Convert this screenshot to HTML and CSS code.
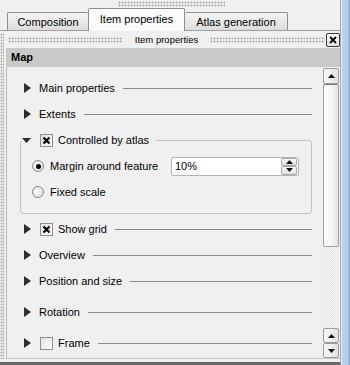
FILE: index.html
```html
<!DOCTYPE html>
<html lang="en">
<head>
<meta charset="UTF-8">
<title>Item properties</title>
<link rel="stylesheet" href="styles.css">
</head>
<body>

<div class="window">
  <div class="main">
    <div class="topbar"><div class="grip top-grip"></div></div>

    <div class="tabs">
      <div class="tab tab-comp">Composition</div>
      <div class="tab tab-item active">Item properties</div>
      <div class="tab tab-atlas">Atlas generation</div>
    </div>

    <div class="dock">
      <div class="dock-grip"></div>
      <div class="dock-body">
        <div class="titlebar">
          <div class="grip"></div>
          <span class="title">Item properties</span>
          <div class="grip"></div>
          <div class="close-btn">
            <svg width="8" height="8" viewBox="0 0 8 8"><path d="M1 1L7 7M7 1L1 7" stroke="#000" stroke-width="1.8"/></svg>
          </div>
        </div>

        <div class="map-header">Map</div>

        <div class="scroll-area">
          <div class="content">
            <div class="row">
              <svg class="tri-right" width="7" height="10" viewBox="0 0 7 10"><path d="M0 0L7 5L0 10z"/></svg>
              <span>Main properties</span>
              <div class="rule"></div>
            </div>
            <div class="row">
              <svg class="tri-right" width="7" height="10" viewBox="0 0 7 10"><path d="M0 0L7 5L0 10z"/></svg>
              <span>Extents</span>
              <div class="rule"></div>
            </div>

            <!-- Controlled by atlas -->
            <div class="group">
              <div class="group-head">
                <svg class="tri-down" width="9" height="5" viewBox="0 0 9 5"><path d="M0 0H9L4.5 5z"/></svg>
                <div class="check">
                  <svg width="9" height="9" viewBox="0 0 9 9"><path d="M1.5 1.5L7.5 7.5M7.5 1.5L1.5 7.5" stroke="#000" stroke-width="2.2"/></svg>
                </div>
                <span>Controlled by atlas</span>
              </div>
              <div class="opt opt-first">
                <div class="radio on"></div>
                <span>Margin around feature</span>
                <div class="spin">
                  <span class="spin-val">10%</span>
                  <div class="spin-btns">
                    <div class="spin-btn"><svg width="7" height="4" viewBox="0 0 7 4"><path d="M0 4L3.5 0L7 4z"/></svg></div>
                    <div class="spin-btn"><svg width="7" height="4" viewBox="0 0 7 4"><path d="M0 0H7L3.5 4z"/></svg></div>
                  </div>
                </div>
              </div>
              <div class="opt">
                <div class="radio"></div>
                <span>Fixed scale</span>
              </div>
            </div>

            <div class="row row-grid">
              <svg class="tri-right" width="7" height="10" viewBox="0 0 7 10"><path d="M0 0L7 5L0 10z"/></svg>
              <div class="check">
                <svg width="9" height="9" viewBox="0 0 9 9"><path d="M1.5 1.5L7.5 7.5M7.5 1.5L1.5 7.5" stroke="#000" stroke-width="2.2"/></svg>
              </div>
              <span>Show grid</span>
              <div class="rule"></div>
            </div>
            <div class="row">
              <svg class="tri-right" width="7" height="10" viewBox="0 0 7 10"><path d="M0 0L7 5L0 10z"/></svg>
              <span>Overview</span>
              <div class="rule"></div>
            </div>
            <div class="row">
              <svg class="tri-right" width="7" height="10" viewBox="0 0 7 10"><path d="M0 0L7 5L0 10z"/></svg>
              <span>Position and size</span>
              <div class="rule"></div>
            </div>
            <div class="row row-spaced">
              <svg class="tri-right" width="7" height="10" viewBox="0 0 7 10"><path d="M0 0L7 5L0 10z"/></svg>
              <span>Rotation</span>
              <div class="rule"></div>
            </div>
            <div class="row row-spaced">
              <svg class="tri-right" width="7" height="10" viewBox="0 0 7 10"><path d="M0 0L7 5L0 10z"/></svg>
              <div class="check"></div>
              <span>Frame</span>
              <div class="rule"></div>
            </div>
          </div>

          <div class="scrollbar">
            <div class="sb-btn sb-top"><svg width="7" height="4" viewBox="0 0 7 4"><path d="M0 4L3.5 0L7 4z"/></svg></div>
            <div class="sb-thumb"></div>
            <div class="sb-track"></div>
            <div class="sb-btn"><svg width="7" height="4" viewBox="0 0 7 4"><path d="M0 4L3.5 0L7 4z"/></svg></div>
            <div class="sb-btn"><svg width="7" height="4" viewBox="0 0 7 4"><path d="M0 0H7L3.5 4z"/></svg></div>
          </div>
        </div>
      </div>
    </div>
  </div>
  <div class="win-edge"></div>
</div>

</body>
</html>
```

FILE: styles.css
```css
body { margin: 0; width: 350px; height: 365px; overflow: hidden; background: #f0f0f0; font-family: "Liberation Sans", Arial, sans-serif; font-size: 11px; color: #000; }
svg path { fill: #111; }
.window { display: flex; height: 365px; }
.main { width: 341px; box-sizing: border-box; border-right: 1px solid #a3a8ae; border-bottom: 3px solid #6a6a6a; padding-bottom: 3px; display: flex; flex-direction: column; }
.win-edge { width: 9px; background: linear-gradient(90deg, #e4edf6 0 1px, #bcd4ec 1px, #aac6e3 8px, #86a3c2 8px); }

/* dotted grips */
.grip { background-image: radial-gradient(circle at 1.5px 1.5px, #a9a9a9 0 0.9px, transparent 1.1px); background-size: 3px 3px; }
.topbar { height: 8px; display: flex; justify-content: center; align-items: flex-start; }
.top-grip { width: 107px; height: 6px; margin-left: 3px; margin-top: 1px; }

/* tabs */
.tabs { height: 23px; box-sizing: border-box; border-bottom: 1px solid #a0a0a0; padding-left: 7px; display: flex; align-items: flex-end; }
.tab { height: 18px; box-sizing: border-box; border: 1px solid #8e8e8e; border-bottom: none; border-radius: 2px 2px 0 0; background: linear-gradient(#f6f6f6, #dcdcdc); display: flex; align-items: center; justify-content: center; }
.tab-comp { width: 81px; border-right: none; }
.tab-item { width: 97px; }
.tab-atlas { width: 103px; border-left: none; }
.tab.active { height: 23px; margin-bottom: -1px; background: #fbfbfb; padding-bottom: 2px; }

/* dock */
.dock { flex: 1; display: flex; }
.dock-grip { width: 4px; margin: 2px 2px 0 0; background-image: radial-gradient(circle at 1.5px 1.5px, #b0b0b0 0 0.9px, transparent 1.1px); background-size: 2px 3px; }
.dock-body { flex: 1; display: flex; flex-direction: column; }
.titlebar { height: 17px; display: flex; align-items: center; padding-left: 2px; }
.titlebar .grip { flex: 1; height: 6px; }
.title { font-size: 9.5px; margin: 0 12px; }
.close-btn { width: 14px; height: 14px; box-sizing: border-box; border: 1px solid #3a3a3a; border-radius: 2px; margin-left: 1px; background: linear-gradient(#ffffff, #e6e6e6); display: flex; align-items: center; justify-content: center; }
.map-header { height: 19px; box-sizing: border-box; padding: 3px 0 0 5px; background: #c9c9c9; font-weight: bold; }

.scroll-area { flex: 1; display: flex; border-left: 1px solid #b7b7b7; border-bottom: 1px solid #c6c6c6; }
.content { flex: 1; padding: 8px 11px 0 13px; display: flex; flex-direction: column; }

.row { height: 26px; flex-shrink: 0; display: flex; align-items: center; padding-left: 4px; }
.row-grid { margin-top: 2px; }
.row-spaced { margin-top: 5px; }
.tri-right { margin-right: 8px; }
.tri-right path, .tri-down path { fill: #2c2c2c; }
.rule { flex: 1; height: 1px; background: #8a8a8a; margin-left: 8px; }

.check { width: 13px; height: 13px; box-sizing: border-box; border: 1px solid #8f8f8f; background: linear-gradient(135deg, #e0e0e0, #ffffff); margin: 0 5px 0 1px; display: flex; align-items: center; justify-content: center; }

/* group box */
.group { margin-top: 13px; border: 1px solid #c4c4c4; border-radius: 3px; padding-bottom: 9px; display: flex; flex-direction: column; flex-shrink: 0; }
.group-head { align-self: flex-start; height: 26px; margin: -14px 0 0 1px; padding-right: 6px; background: #f0f0f0; display: flex; align-items: center; }
.tri-down { margin-right: 9px; }
.group-head .check { margin-left: 0; }
.opt { height: 25px; display: flex; align-items: center; padding: 0 12px 0 11px; }
.opt-first { height: 26px; }
.radio { width: 12px; height: 12px; box-sizing: border-box; border: 1px solid #8a8a8a; border-radius: 50%; background: radial-gradient(circle at 40% 40%, #ffffff, #d8d8d8); margin-right: 6px; display: flex; align-items: center; justify-content: center; }
.radio.on::after { content: ""; width: 5px; height: 5px; border-radius: 50%; background: #000; }

.spin { margin-left: auto; width: 128px; height: 19px; box-sizing: border-box; border: 1px solid #b3b3b3; border-radius: 2px; background: #fff; display: flex; align-items: center; }
.spin-val { flex: 1; padding-left: 3px; }
.spin-btns { width: 16px; align-self: stretch; display: flex; flex-direction: column; padding: 0 1px 0 0; }
.spin-btn { flex: 1; border: 1px solid #a8a8a8; border-radius: 2px; background: linear-gradient(#fbfbfb, #e1e1e1); display: flex; align-items: center; justify-content: center; }

/* scrollbar */
.scrollbar { width: 16px; margin-right: 1px; padding-top: 1px; display: flex; flex-direction: column; }
.sb-btn { height: 15px; box-sizing: border-box; border: 1px solid #9c9c9c; border-radius: 2px; background: linear-gradient(90deg, #f7f7f7, #e3e3e3); display: flex; align-items: center; justify-content: center; }
.sb-top { height: 16px; }
.sb-thumb { height: 163px; box-sizing: border-box; border: 1px solid #a0a0a0; border-top-color: #777; border-radius: 2px; background: linear-gradient(90deg, #fdfdfd, #f4f4f4 60%, #e2e2e2); }
.sb-track { flex: 1; background: repeating-conic-gradient(#e4e4e4 0 25%, #fafafa 0 50%) 0 0 / 2px 2px; }
```
